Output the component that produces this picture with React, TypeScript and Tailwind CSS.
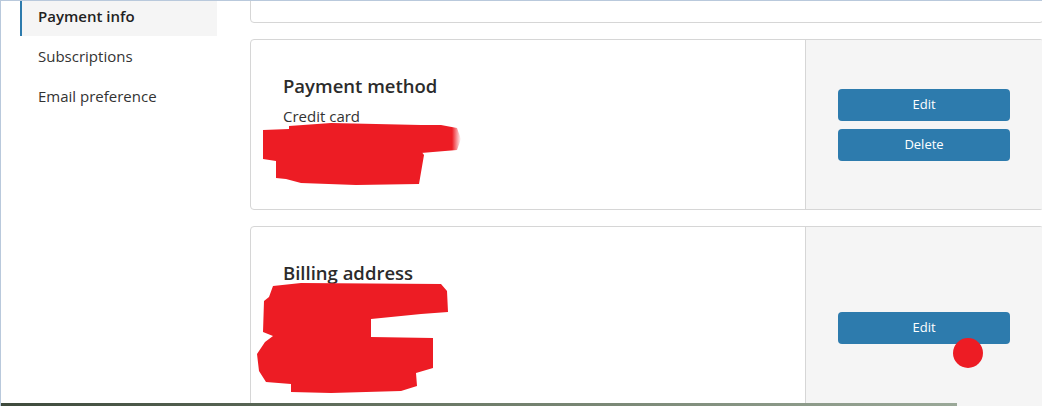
import React from "react";

const font = { fontFamily: '"Open Sans", "Noto Sans", "Liberation Sans", sans-serif' };

function ScribbleA() {
  return (
    <svg className="absolute left-0 top-0 pointer-events-none" width="1042" height="406" viewBox="0 0 1042 406">
      <defs>
        <linearGradient id="fadeA" x1="0" x2="1" y1="0" y2="0">
          <stop offset="0" stopColor="#ed1c24" />
          <stop offset="0.82" stopColor="#ed1c24" />
          <stop offset="1" stopColor="#ed1c24" stopOpacity="0" />
        </linearGradient>
      </defs>
      <polygon fill="#ed1c24" points="262,129 288,128 288,125 330,122 420,124 420,150 423,154 418,183 355,184 300,182 285,178 275,177 275,160 262,158" />
      <polygon fill="url(#fadeA)" points="410,124 440,124 456,127 460,138 456,149 420,152 410,152" />
    </svg>
  );
}

function ScribbleB() {
  return (
    <svg className="absolute left-0 top-0 pointer-events-none" width="1042" height="406" viewBox="0 0 1042 406">
      <polygon
        fill="#ed1c24"
        points="272,285 300,282 440,283 446,290 447,311 420,313 370,318 370,336 432,337 432,367 415,372 416,385 400,390 330,392 290,391 290,383 265,381 258,370 256,353 264,341 272,335 262,331 263,300 268,296"
      />
      <circle cx="967" cy="352" r="15" fill="#ed1c24" />
    </svg>
  );
}

function NavItem({ label, active }: { label: string; active?: boolean }) {
  return (
    <div
      className={
        active
          ? "h-10 flex items-center pl-[16px] border-l-2 border-[#2d7bad] bg-[#f5f5f5] text-[15px] font-semibold text-[#222]"
          : "h-10 flex items-center pl-[18px] text-[15px] text-[#333]"
      }
    >
      {label}
    </div>
  );
}

function Btn({ label }: { label: string }) {
  return (
    <button className="w-[172px] h-8 rounded-[4px] bg-[#2d7bad] text-white text-[13px] flex items-center justify-center">
      {label}
    </button>
  );
}

export default function App() {
  return (
    <div
      className="relative w-[1042px] h-[406px] overflow-hidden bg-white border-t border-l border-[#b9c9dc]"
      style={font}
    >
      <div className="flex">
        <div className="w-[197px] ml-[19px] -mt-[5px] shrink-0">
          <NavItem label="Payment info" active />
          <NavItem label="Subscriptions" />
          <NavItem label="Email preference" />
        </div>
        <div className="ml-[33px] w-[794px] shrink-0 flex flex-col gap-[16px] -mt-[40px]">
          <div className="h-[62px] border border-[#d6d6d6] rounded-[4px] bg-white" />
          <div className="h-[171px] border border-[#d6d6d6] rounded-[4px] bg-white flex overflow-hidden">
            <div className="flex-1 pl-[32px] pt-[34px]">
              <div className="text-[18.5px] font-semibold text-[#2b2b2b] leading-6">Payment method</div>
              <div className="mt-[8px] text-[15px] text-[#333] leading-5">Credit card</div>
            </div>
            <div className="w-[238px] bg-[#f5f5f5] border-l border-[#d6d6d6] flex flex-col items-start justify-center pl-[32px] gap-2">
              <Btn label="Edit" />
              <Btn label="Delete" />
            </div>
          </div>
          <div className="h-[203px] border border-[#d6d6d6] rounded-[4px] bg-white flex overflow-hidden">
            <div className="flex-1 pl-[32px] pt-[34px]">
              <div className="text-[18.5px] font-semibold text-[#2b2b2b] leading-6">Billing address</div>
            </div>
            <div className="w-[238px] bg-[#f5f5f5] border-l border-[#d6d6d6] flex flex-col items-start justify-center pl-[32px]">
              <Btn label="Edit" />
            </div>
          </div>
        </div>
      </div>
      <ScribbleA />
      <ScribbleB />
      <div className="absolute left-0 bottom-0 w-[956px] h-[3px] bg-gradient-to-r from-[#3e4a3c] via-[#6f7d6a] to-[#9aa898]" />
    </div>
  );
}
